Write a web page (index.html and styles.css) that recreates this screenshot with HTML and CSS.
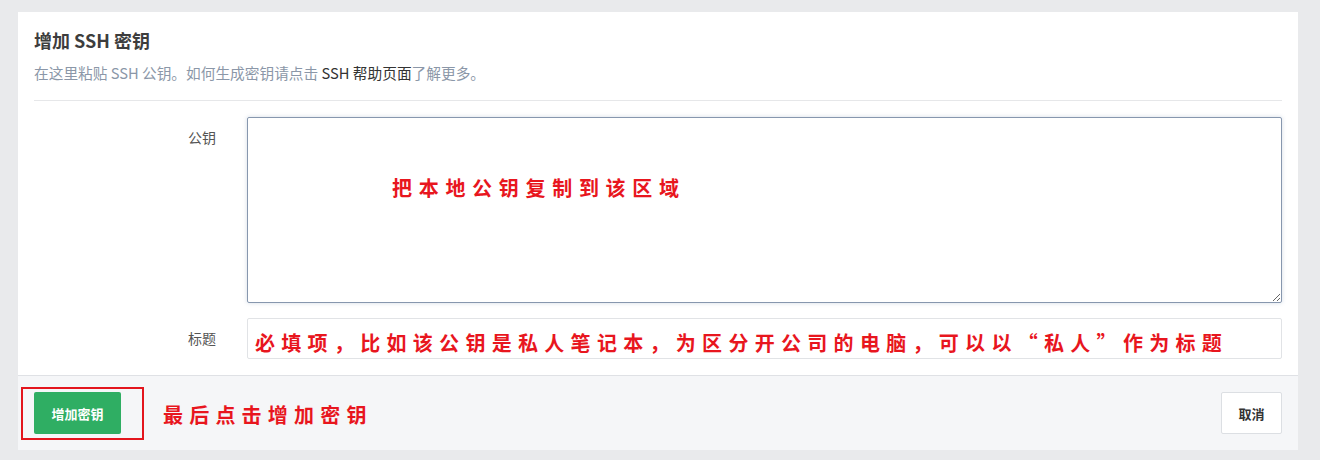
FILE: index.html
```html
<!DOCTYPE html>
<html lang="zh-CN">
<head>
    <meta charset="UTF-8">
    <title>增加 SSH 密钥</title>
    <link rel="stylesheet" href="styles.css">
</head>
<body>

    <!-- Add key card -->
    <div class="card">
        <div class="card-header">
            <h2>增加 SSH 密钥</h2>
            <p class="hint">在这里粘贴 SSH 公钥。如何生成密钥请点击 <a href="#">SSH 帮助页面</a>了解更多。</p>
        </div>

        <div class="form">
            <div class="row">
                <label class="label">公钥</label>
                <div class="field">
                    <textarea class="key-input"></textarea>
                    <span class="note note-key">把本地公钥复制到该区域</span>
                </div>
            </div>
            <div class="row">
                <label class="label">标题</label>
                <div class="field">
                    <input class="title-input" type="text">
                    <span class="note note-title">必填项，比如该公钥是私人笔记本，为区分开公司的电脑，可以以“私人”作为标题</span>
                </div>
            </div>
        </div>

        <div class="card-footer">
            <div class="submit-wrap">
                <button class="btn btn-green">增加密钥</button>
                <span class="mark"></span>
            </div>
            <span class="note note-footer">最后点击增加密钥</span>
            <button class="btn btn-cancel">取消</button>
        </div>
    </div>

</body>
</html>
```

FILE: styles.css
```css
body {
    margin: 0;
    padding: 12px 22px 10px 18px;
    background-color: #e9eaec;
    font-family: 'Noto Sans CJK SC', 'Noto Sans', sans-serif;
    color: #333;
}

.card {
    background-color: #fff;
    width: 1280px;
}

.card-header {
    margin: 0 16px;
    padding-top: 16px;
    padding-bottom: 17px;
    border-bottom: 1px solid #e6e7e9;
}

.card-header h2 {
    margin: 0;
    font-size: 18px;
    line-height: 24px;
    font-weight: bold;
    color: #3d3d3d;
}

.hint {
    margin: 11px 0 0;
    font-size: 14.7px;
    line-height: 20px;
    color: #8b97a8;
}

.hint a {
    color: #333;
    text-decoration: none;
}

.form {
    padding: 16px 16px 16px;
    display: flex;
    flex-direction: column;
    gap: 15px;
}

.row {
    display: flex;
    gap: 31px;
}

.label {
    width: 182px;
    flex-shrink: 0;
    text-align: right;
    font-size: 14px;
    line-height: 18px;
    color: #555;
    padding-top: 11px;
}

.field {
    position: relative;
    flex: 1;
}

.key-input {
    display: block;
    box-sizing: border-box;
    width: 100%;
    height: 186px;
    margin: 0;
    border: 1px solid #8797ae;
    border-radius: 2px;
    box-shadow: 0 0 4px rgba(80, 110, 150, 0.25);
    font-family: inherit;
}

.title-input {
    display: block;
    box-sizing: border-box;
    width: 100%;
    height: 41px;
    margin: 0;
    border: 1px solid #e1e3e6;
    border-radius: 2px;
}

/* red annotations on top of the screenshot */
.note {
    color: #e8161e;
    font-size: 20px;
    font-weight: bold;
    letter-spacing: 6.7px;
    line-height: 26px;
    white-space: nowrap;
}

.note-key {
    position: absolute;
    left: 145px;
    top: 58px;
}

.note-title {
    position: absolute;
    left: 8px;
    top: 12px;
    letter-spacing: 6.3px;
}

.card-footer {
    display: flex;
    align-items: center;
    padding: 16px 16px;
    background-color: #f5f6f8;
    border-top: 1px solid #dfe1e5;
}

.submit-wrap {
    position: relative;
    display: flex;
}

.mark {
    position: absolute;
    left: -13px;
    top: -5px;
    width: 119px;
    height: 49px;
    border: 2px solid #e3151d;
}

.note-footer {
    margin-left: 42px;
    padding-top: 3px;
    letter-spacing: 6.2px;
}

.btn {
    height: 42px;
    border-radius: 2px;
    font-family: inherit;
    font-size: 13px;
    font-weight: bold;
    cursor: pointer;
}

.btn-green {
    width: 87px;
    border: none;
    background-color: #2fae63;
    color: #fff;
}

.btn-cancel {
    margin-left: auto;
    width: 61px;
    border: 1px solid #dcdfe3;
    background-color: #fff;
    color: #333;
}
```
